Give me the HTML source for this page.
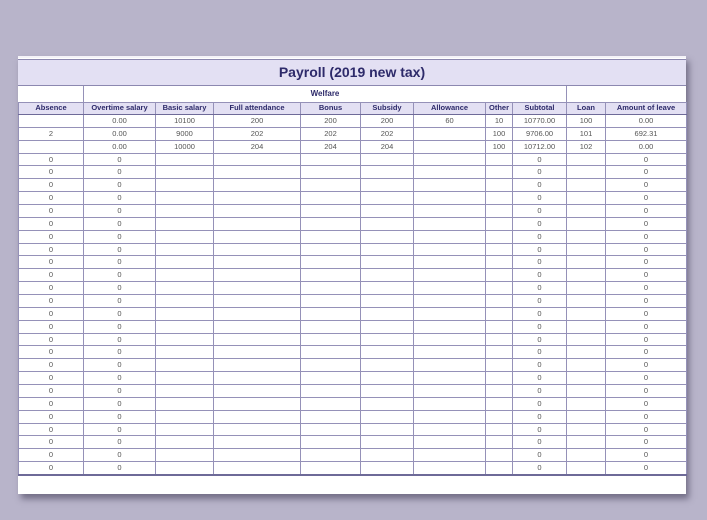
<!DOCTYPE html>
<html><head><meta charset="utf-8"><style>
body{margin:0;width:707px;height:520px;background:#b8b4ca;position:relative;overflow:hidden;font-family:"Liberation Sans",sans-serif}
.paper{position:absolute;left:18px;top:56px;width:668px;height:438px;background:#fff;box-shadow:3px 5px 6px rgba(60,55,80,.55);border-top:2px solid #f4f3f8;box-sizing:border-box}
.title{position:absolute;left:0;top:1px;width:668px;height:27px;background:#e3e0f3;border-bottom:1px solid #8c88b0;border-top:1px solid #8c88b0;box-sizing:border-box;text-align:center;font-weight:bold;font-size:14px;line-height:25px;color:#2d2a6a}
table{position:absolute;left:0;top:28px;border-collapse:collapse;table-layout:fixed;width:668px;border-bottom:2px solid #6e6a98}
td{border:1px solid #9591b8;padding:0;text-align:center;font-size:7.5px;color:#555;height:11.86px;line-height:10px;overflow:hidden;white-space:nowrap}
tr.h td{font-weight:bold;color:#2d2a6a;background:#e3e0f3;height:11.5px;border-bottom:1px solid #6e6a98}
tr.w td{height:15.5px;font-weight:bold;color:#2d2a6a;font-size:8px;border-top:none}
</style></head><body>
<div class="paper">
<div class="title">Payroll (2019 new tax)</div>
<table>
<colgroup><col style="width:65px"><col style="width:72px"><col style="width:58px"><col style="width:87px"><col style="width:60px"><col style="width:53px"><col style="width:72px"><col style="width:27px"><col style="width:54px"><col style="width:39px"><col style="width:81px"></colgroup>
<tr class="w"><td style="border-left:none"></td><td colspan="8">Welfare</td><td colspan="2" style="border-right:none"></td></tr>
<tr class="h"><td>Absence</td><td>Overtime salary</td><td>Basic salary</td><td>Full attendance</td><td>Bonus</td><td>Subsidy</td><td>Allowance</td><td>Other</td><td>Subtotal</td><td>Loan</td><td>Amount of leave</td></tr>
<tr><td></td><td>0.00</td><td>10100</td><td>200</td><td>200</td><td>200</td><td>60</td><td>10</td><td>10770.00</td><td>100</td><td>0.00</td></tr>
<tr><td>2</td><td>0.00</td><td>9000</td><td>202</td><td>202</td><td>202</td><td></td><td>100</td><td>9706.00</td><td>101</td><td>692.31</td></tr>
<tr><td></td><td>0.00</td><td>10000</td><td>204</td><td>204</td><td>204</td><td></td><td>100</td><td>10712.00</td><td>102</td><td>0.00</td></tr>
<tr><td>0</td><td>0</td><td></td><td></td><td></td><td></td><td></td><td></td><td>0</td><td></td><td>0</td></tr>
<tr><td>0</td><td>0</td><td></td><td></td><td></td><td></td><td></td><td></td><td>0</td><td></td><td>0</td></tr>
<tr><td>0</td><td>0</td><td></td><td></td><td></td><td></td><td></td><td></td><td>0</td><td></td><td>0</td></tr>
<tr><td>0</td><td>0</td><td></td><td></td><td></td><td></td><td></td><td></td><td>0</td><td></td><td>0</td></tr>
<tr><td>0</td><td>0</td><td></td><td></td><td></td><td></td><td></td><td></td><td>0</td><td></td><td>0</td></tr>
<tr><td>0</td><td>0</td><td></td><td></td><td></td><td></td><td></td><td></td><td>0</td><td></td><td>0</td></tr>
<tr><td>0</td><td>0</td><td></td><td></td><td></td><td></td><td></td><td></td><td>0</td><td></td><td>0</td></tr>
<tr><td>0</td><td>0</td><td></td><td></td><td></td><td></td><td></td><td></td><td>0</td><td></td><td>0</td></tr>
<tr><td>0</td><td>0</td><td></td><td></td><td></td><td></td><td></td><td></td><td>0</td><td></td><td>0</td></tr>
<tr><td>0</td><td>0</td><td></td><td></td><td></td><td></td><td></td><td></td><td>0</td><td></td><td>0</td></tr>
<tr><td>0</td><td>0</td><td></td><td></td><td></td><td></td><td></td><td></td><td>0</td><td></td><td>0</td></tr>
<tr><td>0</td><td>0</td><td></td><td></td><td></td><td></td><td></td><td></td><td>0</td><td></td><td>0</td></tr>
<tr><td>0</td><td>0</td><td></td><td></td><td></td><td></td><td></td><td></td><td>0</td><td></td><td>0</td></tr>
<tr><td>0</td><td>0</td><td></td><td></td><td></td><td></td><td></td><td></td><td>0</td><td></td><td>0</td></tr>
<tr><td>0</td><td>0</td><td></td><td></td><td></td><td></td><td></td><td></td><td>0</td><td></td><td>0</td></tr>
<tr><td>0</td><td>0</td><td></td><td></td><td></td><td></td><td></td><td></td><td>0</td><td></td><td>0</td></tr>
<tr><td>0</td><td>0</td><td></td><td></td><td></td><td></td><td></td><td></td><td>0</td><td></td><td>0</td></tr>
<tr><td>0</td><td>0</td><td></td><td></td><td></td><td></td><td></td><td></td><td>0</td><td></td><td>0</td></tr>
<tr><td>0</td><td>0</td><td></td><td></td><td></td><td></td><td></td><td></td><td>0</td><td></td><td>0</td></tr>
<tr><td>0</td><td>0</td><td></td><td></td><td></td><td></td><td></td><td></td><td>0</td><td></td><td>0</td></tr>
<tr><td>0</td><td>0</td><td></td><td></td><td></td><td></td><td></td><td></td><td>0</td><td></td><td>0</td></tr>
<tr><td>0</td><td>0</td><td></td><td></td><td></td><td></td><td></td><td></td><td>0</td><td></td><td>0</td></tr>
<tr><td>0</td><td>0</td><td></td><td></td><td></td><td></td><td></td><td></td><td>0</td><td></td><td>0</td></tr>
<tr><td>0</td><td>0</td><td></td><td></td><td></td><td></td><td></td><td></td><td>0</td><td></td><td>0</td></tr>
<tr><td>0</td><td>0</td><td></td><td></td><td></td><td></td><td></td><td></td><td>0</td><td></td><td>0</td></tr>
</table>
</div>
</body></html>
